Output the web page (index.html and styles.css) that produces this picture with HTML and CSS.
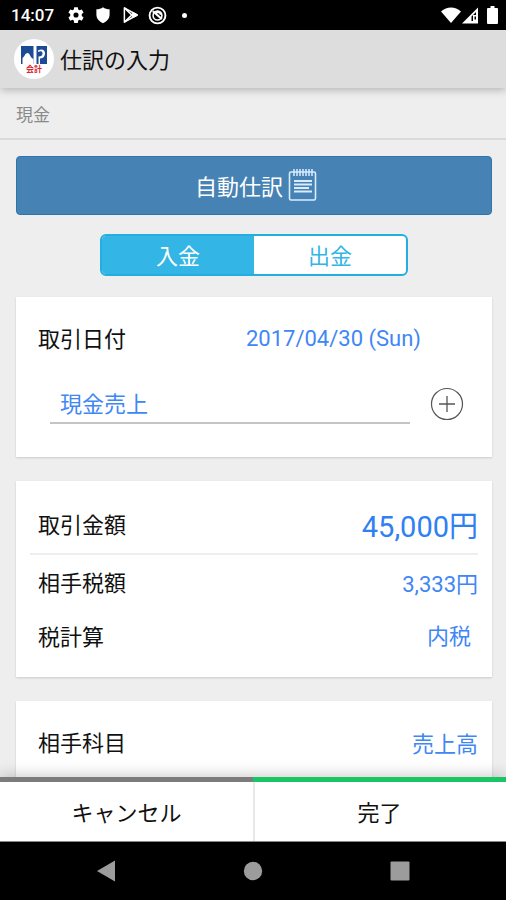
FILE: index.html
```html
<!DOCTYPE html>
<html lang="ja">
<head>
<meta charset="utf-8">
<meta name="viewport" content="width=device-width, initial-scale=1">
<title>仕訳の入力</title>
<link rel="stylesheet" href="styles.css">
</head>
<body>
<div class="status-bar">
  <span class="clock">14:07</span>
  <div class="status-icons">
    <svg width="18" height="18" viewBox="0 0 24 24" fill="#fff"><path fill-rule="evenodd" d="M9.6 1.5h4.8l.6 3.1 1.7 1 3-1.1 2.4 4.2-2.4 2.1v2.4l2.4 2.1-2.4 4.2-3-1.1-1.7 1-.6 3.1H9.6L9 19.4l-1.7-1-3 1.1-2.4-4.2 2.4-2.1v-2.4L1.900 8.700l2.400-4.200 3 1.100 1.700-1zM12 8.600a3.400 3.400 0 1 0 0 6.800 3.400 3.400 0 0 0 0-6.800z"/></svg>
    <svg width="18" height="18" viewBox="0 0 24 24" fill="#fff"><path d="M12 1.500c2.500 2 5.500 2.800 8.800 2.800v7.200c0 5-3.800 9-8.800 11.500-5-2.500-8.800-6.500-8.800-11.500V4.300c3.300 0 6.300-.8 8.800-2.800z"/></svg>
    <svg width="18" height="18" viewBox="0 0 24 24" fill="none" stroke="#fff" stroke-width="2" stroke-linejoin="round"><path d="M4.500 2.500v19L21.500 12z"/><path d="M4.500 2.500 17 14.500M4.500 21.500 17 9.500"/><path d="m17 9.500 4.500 2.500-4.500 2.500-2.500-2.500z" fill="#fff"/></svg>
    <svg width="19" height="19" viewBox="0 0 24 24" fill="none" stroke="#fff"><circle cx="12" cy="12" r="10" stroke-width="2.400"/><circle cx="12" cy="12" r="5.600" stroke-width="2"/><path d="m6 6.500 11.500 10" stroke-width="2.600"/><path d="M9.500 8.200c3-1.500 6-.3 7 2.600" stroke-width="3"/></svg>
  </div>
  <span class="more-dot"></span>
  <div class="signals">
    <svg width="20" height="17" viewBox="0 0 20 17" fill="#fff"><path d="M0 4.500C6-.8 14-.8 20 4.500L10 16z"/></svg>
    <svg width="17" height="17" viewBox="0 0 17 17"><path d="M0 16.500 16 .5v16z" fill="#fff"/><path d="M9.500 9.500 14 5v3h-3v6H9.500zM12.500 9.500H14v3h-1.500z" fill="#000"/></svg>
    <svg width="11" height="18" viewBox="0 0 11 18" fill="#fff"><path d="M3.500 0h4v2H10a1 1 0 0 1 1 1v14a1 1 0 0 1-1 1H1a1 1 0 0 1-1-1V3a1 1 0 0 1 1-1h2.500z"/></svg>
  </div>
</div>

<header class="app-bar">
  <div class="app-logo">
    <svg width="26" height="20" viewBox="0 0 26 20"><path d="M0 1h12.500v18H0z" fill="#1c4b94"/><path d="M1.500 19v-6C3.500 12 4 8 6.500 8s2.500 4 4.500 5l1.500 1.500V19z" fill="#fff"/><path d="M15.500 1H26v18H15.500z" fill="#1c4b94"/><path d="M17 5.500c4-2.500 7.500-.5 7 3.500-.4 3-2.500 4.500-5 4.500v5.500h-1.500v-7.500c2.500 0 4-.8 4-3s-1.500-2.800-4.500-1.500z" fill="#fff"/></svg>
    <span class="logo-text">会計</span>
  </div>
  <h1 class="title">仕訳の入力</h1>
</header>

<div class="account">現金</div>

<main class="content">
  <button class="auto-entry" type="button">自動仕訳
    <svg width="30" height="34" viewBox="0 0 30 34" fill="none" stroke="#d9ebff"><rect x="1.500" y="4" width="26" height="28" rx="1.500" stroke-width="1.600"/><path d="M6 1v7M9 1v7M12 1v7M15 1v7M18 1v7M21 1v7M24 1v7" stroke-width="1.500"/><path d="M6 13h18M6 16.500h18M6 20h15M6 23.500h18" stroke-width="1.800"/></svg>
  </button>

  <div class="segmented">
    <button class="segment selected" type="button" aria-pressed="true">入金</button>
    <button class="segment" type="button" aria-pressed="false">出金</button>
  </div>

  <section class="card">
    <div class="row">
      <span class="label" id="date-label">取引日付</span>
      <button class="value date" type="button" aria-describedby="date-label">2017/04/30 (Sun)</button>
    </div>
    <div class="row summary">
      <div class="field"><input class="summary-input" type="text" value="現金売上" aria-label="摘要"></div>
      <button class="add" type="button" aria-label="追加">
        <svg width="34" height="34" viewBox="0 0 34 34" fill="none" stroke="#555"><circle cx="17" cy="17" r="15.500" stroke-width="1.200"/><path d="M9 17h16M17 9v16" stroke-width="1.300"/></svg>
      </button>
    </div>
  </section>

  <section class="card">
    <div class="row total">
      <span class="label" id="amount-label">取引金額</span>
      <button class="value amount" type="button" aria-describedby="amount-label">45,000円</button>
    </div>
    <div class="row">
      <span class="label" id="tax-label">相手税額</span>
      <button class="value" type="button" aria-describedby="tax-label">3,333円</button>
    </div>
    <div class="row">
      <label class="label" for="tax-mode">税計算</label>
      <select class="value tax-mode" id="tax-mode"><option>内税</option></select>
    </div>
  </section>

  <section class="card">
    <div class="row">
      <span class="label" id="subject-label">相手科目</span>
      <button class="value" type="button" aria-describedby="subject-label">売上高</button>
    </div>
  </section>
</main>

<footer class="actions">
  <button class="action cancel" type="button">キャンセル</button>
  <button class="action done" type="button">完了</button>
</footer>

<nav class="system-nav">
  <button class="nav-button" type="button" aria-label="戻る"><svg width="20" height="22" viewBox="0 0 20 22" fill="#9c9c9c"><path d="M1 11 19 .5v21z"/></svg></button>
  <button class="nav-button" type="button" aria-label="ホーム"><svg width="20" height="20" viewBox="0 0 20 20" fill="#9c9c9c"><circle cx="10" cy="10" r="9.200"/></svg></button>
  <button class="nav-button" type="button" aria-label="履歴"><svg width="20" height="20" viewBox="0 0 20 20" fill="#9c9c9c"><rect x=".5" y=".5" width="19" height="19" rx="1"/></svg></button>
</nav>
</body>
</html>
```
FILE: styles.css
```css
* {
  box-sizing: border-box;
}

body {
  margin: 0;
  height: 100vh;
  display: flex;
  flex-direction: column;
  overflow: hidden;
  background: #eee;
  color: #111;
  font-family: Roboto, "Noto Sans CJK JP", sans-serif;
  font-size: 22px;
  font-weight: 400;
}

button,
input,
select {
  margin: 0;
  padding: 0;
  border: 0;
  background: none;
  color: inherit;
  font: inherit;
}

svg {
  display: block;
}

.status-bar {
  flex: none;
  display: flex;
  align-items: center;
  height: 30px;
  padding: 0 8px 0 11px;
  background: #000;
  color: #fff;
}

.clock {
  font-size: 17px;
  font-weight: 500;
}

.status-icons {
  display: flex;
  align-items: center;
  gap: 9px;
  margin-left: 13px;
}

.more-dot {
  width: 5px;
  height: 5px;
  margin-left: 15px;
  border-radius: 50%;
  background: #fff;
}

.signals {
  display: flex;
  align-items: center;
  gap: 1px;
  margin-left: auto;
}

.signals svg:last-child {
  margin-left: 7px;
}

.app-bar {
  flex: none;
  display: flex;
  align-items: center;
  gap: 6px;
  height: 58px;
  padding: 0 14px;
  background: #ddd;
  box-shadow: 0 2px 8px rgba(0, 0, 0, 0.25);
  z-index: 1;
}

.app-logo {
  display: flex;
  flex-direction: column;
  align-items: center;
  justify-content: center;
  width: 40px;
  height: 40px;
  border-radius: 50%;
  background: #fff;
}

.logo-text {
  color: #d8232a;
  font-size: 8px;
  font-weight: 700;
  line-height: 9px;
}

.title {
  margin: 0;
  padding-bottom: 2px;
  font-size: 22px;
  font-weight: 400;
}

.account {
  flex: none;
  display: flex;
  align-items: center;
  height: 52px;
  padding: 0 16px;
  border-bottom: 2px solid #dadada;
  color: #8a8a8a;
  font-size: 17px;
}

.content {
  flex: 1;
  min-height: 0;
  display: flex;
  flex-direction: column;
  padding: 16px 14px 0 16px;
  overflow: hidden;
}

.auto-entry {
  flex: none;
  display: flex;
  align-items: center;
  justify-content: center;
  gap: 5px;
  height: 59px;
  padding: 0 0 2px 5px;
  border: 1px solid #2f74ad;
  border-radius: 4px;
  background: #4682b4;
  color: #fff;
}

.segmented {
  flex: none;
  display: flex;
  align-self: center;
  width: 308px;
  height: 42px;
  margin: 19px 0 21px;
  border: 2px solid #22afdf;
  border-radius: 6px;
  background: #fff;
  overflow: hidden;
}

.segment {
  flex: 1;
  padding-bottom: 2px;
  color: #33b5e5;
}

.segment.selected {
  background: #33b5e5;
  color: #fff;
}

.card {
  flex: none;
  margin-bottom: 24px;
  padding: 14px;
  background: #fff;
  box-shadow: 0 1px 2px rgba(0, 0, 0, 0.15);
}

.row {
  display: flex;
  align-items: center;
  justify-content: space-between;
  height: 54px;
  padding-left: 8px;
}

.label {
  padding-bottom: 2px;
}

.value {
  color: #3f87f5;
  text-align: right;
}

.date {
  margin-right: 57px;
}

.summary {
  margin: 12px 0;
  padding: 0 14px 0 20px;
  gap: 20px;
}

.field {
  flex: 1;
  display: flex;
  height: 40px;
  border-bottom: 2px solid #c4c4c4;
}

.summary-input {
  width: 100%;
  padding: 0 10px 2px;
  color: #3f87f5;
  outline: 0;
}

.total {
  height: 60px;
  border-bottom: 2px solid #eee;
}

.amount {
  color: #2f80f2;
  font-size: 29px;
}

.tax-mode {
  margin-right: 7px;
  appearance: none;
}

.actions {
  flex: none;
  display: flex;
  height: 65px;
  border-bottom: 1px solid #888;
  background: #fff;
  box-shadow: 0 -2px 14px rgba(0, 0, 0, 0.2);
  z-index: 1;
}

.action {
  flex: 1;
  padding-bottom: 2px;
  border-top: 5px solid #7c7c7c;
}

.done {
  border-top-color: #1ac565;
  box-shadow: inset 2px 0 0 #e8e8e8;
}

.system-nav {
  flex: none;
  display: flex;
  align-items: center;
  justify-content: center;
  height: 58px;
  background: #000;
}

.nav-button {
  display: flex;
  justify-content: center;
  width: 29%;
}
```
